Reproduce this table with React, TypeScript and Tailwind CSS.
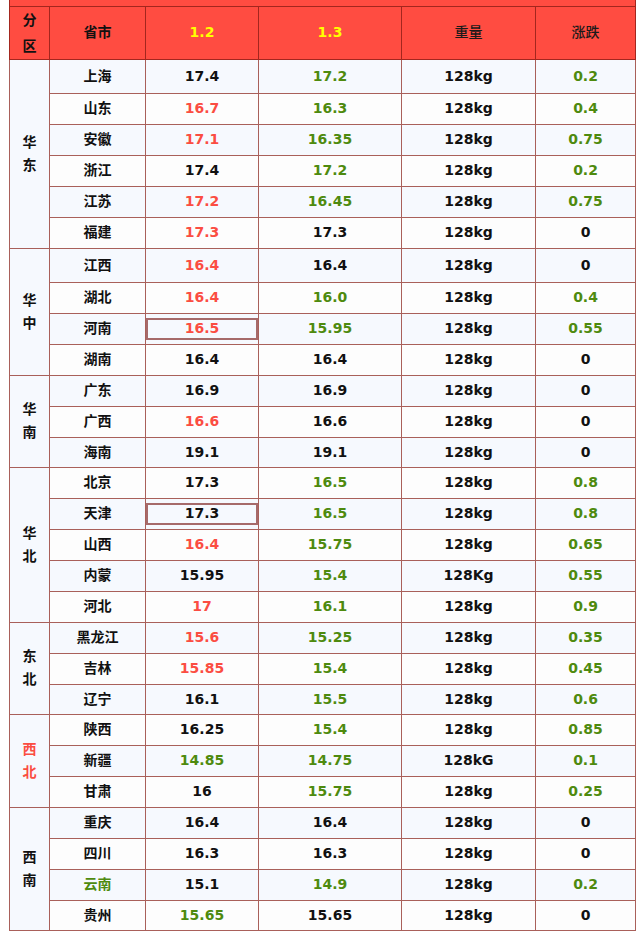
import React from "react";

type Row = {
  name: string;
  nameColor?: "g" | "r" | "k";
  a: string;
  ac: "k" | "r" | "g";
  b: string;
  bc: "k" | "r" | "g";
  w: string;
  d: string;
  dc: "k" | "g";
  boxed?: boolean;
  h: number;
};

type Group = { label: string; red?: boolean; rows: Row[] };

const groups: Group[] = [
  {
    label: "华东",
    rows: [
      { name: "上海", a: "17.4", ac: "k", b: "17.2", bc: "g", w: "128kg", d: "0.2", dc: "g", h: 34 },
      { name: "山东", a: "16.7", ac: "r", b: "16.3", bc: "g", w: "128kg", d: "0.4", dc: "g", h: 31 },
      { name: "安徽", a: "17.1", ac: "r", b: "16.35", bc: "g", w: "128kg", d: "0.75", dc: "g", h: 31 },
      { name: "浙江", a: "17.4", ac: "k", b: "17.2", bc: "g", w: "128kg", d: "0.2", dc: "g", h: 31 },
      { name: "江苏", a: "17.2", ac: "r", b: "16.45", bc: "g", w: "128kg", d: "0.75", dc: "g", h: 31 },
      { name: "福建", a: "17.3", ac: "r", b: "17.3", bc: "k", w: "128kg", d: "0", dc: "k", h: 31 },
    ],
  },
  {
    label: "华中",
    rows: [
      { name: "江西", a: "16.4", ac: "r", b: "16.4", bc: "k", w: "128kg", d: "0", dc: "k", h: 34 },
      { name: "湖北", a: "16.4", ac: "r", b: "16.0", bc: "g", w: "128kg", d: "0.4", dc: "g", h: 31 },
      { name: "河南", a: "16.5", ac: "r", b: "15.95", bc: "g", w: "128kg", d: "0.55", dc: "g", boxed: true, h: 31 },
      { name: "湖南", a: "16.4", ac: "k", b: "16.4", bc: "k", w: "128kg", d: "0", dc: "k", h: 31 },
    ],
  },
  {
    label: "华南",
    rows: [
      { name: "广东", a: "16.9", ac: "k", b: "16.9", bc: "k", w: "128kg", d: "0", dc: "k", h: 31 },
      { name: "广西", a: "16.6", ac: "r", b: "16.6", bc: "k", w: "128kg", d: "0", dc: "k", h: 31 },
      { name: "海南", a: "19.1", ac: "k", b: "19.1", bc: "k", w: "128kg", d: "0", dc: "k", h: 30 },
    ],
  },
  {
    label: "华北",
    rows: [
      { name: "北京", a: "17.3", ac: "k", b: "16.5", bc: "g", w: "128kg", d: "0.8", dc: "g", h: 31 },
      { name: "天津", a: "17.3", ac: "k", b: "16.5", bc: "g", w: "128kg", d: "0.8", dc: "g", boxed: true, h: 31 },
      { name: "山西", a: "16.4", ac: "r", b: "15.75", bc: "g", w: "128kg", d: "0.65", dc: "g", h: 31 },
      { name: "内蒙", a: "15.95", ac: "k", b: "15.4", bc: "g", w: "128Kg", d: "0.55", dc: "g", h: 31 },
      { name: "河北", a: "17", ac: "r", b: "16.1", bc: "g", w: "128kg", d: "0.9", dc: "g", h: 31 },
    ],
  },
  {
    label: "东北",
    rows: [
      { name: "黑龙江", a: "15.6", ac: "r", b: "15.25", bc: "g", w: "128kg", d: "0.35", dc: "g", h: 31 },
      { name: "吉林", a: "15.85", ac: "r", b: "15.4", bc: "g", w: "128kg", d: "0.45", dc: "g", h: 31 },
      { name: "辽宁", a: "16.1", ac: "k", b: "15.5", bc: "g", w: "128kg", d: "0.6", dc: "g", h: 30 },
    ],
  },
  {
    label: "西北",
    red: true,
    rows: [
      { name: "陕西", a: "16.25", ac: "k", b: "15.4", bc: "g", w: "128kg", d: "0.85", dc: "g", h: 31 },
      { name: "新疆", a: "14.85", ac: "g", b: "14.75", bc: "g", w: "128kG", d: "0.1", dc: "g", h: 31 },
      { name: "甘肃", a: "16", ac: "k", b: "15.75", bc: "g", w: "128kg", d: "0.25", dc: "g", h: 31 },
    ],
  },
  {
    label: "西南",
    rows: [
      { name: "重庆", a: "16.4", ac: "k", b: "16.4", bc: "k", w: "128kg", d: "0", dc: "k", h: 31 },
      { name: "四川", a: "16.3", ac: "k", b: "16.3", bc: "k", w: "128kg", d: "0", dc: "k", h: 31 },
      { name: "云南", nameColor: "g", a: "15.1", ac: "k", b: "14.9", bc: "g", w: "128kg", d: "0.2", dc: "g", h: 31 },
      { name: "贵州", a: "15.65", ac: "g", b: "15.65", bc: "k", w: "128kg", d: "0", dc: "k", h: 30 },
    ],
  },
];

const colorClass = (c?: "k" | "r" | "g") =>
  c === "r" ? "text-[#fb4d42]" : c === "g" ? "text-[#4e8a0e]" : "text-[#111111]";

const td = "border border-[#a9605a] text-center align-middle p-0";

export default function App() {
  let idx = 0;
  return (
    <div
      className="w-[641px] h-[938px] bg-white overflow-hidden"
      style={{ fontFamily: '"DejaVu Sans", "Noto Sans CJK SC", sans-serif' }}
    >
      <table className="ml-[9px] w-[626px] table-fixed border-collapse text-[14px] font-bold">
        <colgroup>
          <col className="w-[40px]" />
          <col className="w-[96px]" />
          <col className="w-[113px]" />
          <col className="w-[143px]" />
          <col className="w-[134px]" />
          <col className="w-[100px]" />
        </colgroup>
        <tbody>
          <tr className="h-[6px]">
            <td colSpan={6} className="bg-[#ff4c41] border-x border-b border-[#a3261e] p-0"></td>
          </tr>
          <tr className="h-[51px] bg-[#ff4c41]">
            <td className="border border-[#a3261e] text-center align-middle p-0">
              <div className="flex flex-col items-center leading-[26px] text-[#111]">
                <span>分</span>
                <span>区</span>
              </div>
            </td>
            <td className="border border-[#a3261e] text-center text-[#111]">省市</td>
            <td className="border border-[#a3261e] text-center text-[#ffff00]">1.2</td>
            <td className="border border-[#a3261e] text-center text-[#ffff00]">1.3</td>
            <td className="border border-[#a3261e] text-center text-[#1a1a1a] font-medium">重量</td>
            <td className="border border-[#a3261e] text-center text-[#1a1a1a] font-medium">涨跌</td>
          </tr>
          {groups.map((g) =>
            g.rows.map((r, i) => {
              const bg = idx % 2 === 0 ? "bg-[#f6f9fe]" : "bg-[#fdfdfd]";
              idx++;
              return (
                <tr key={r.name} className={bg} style={{ height: r.h }}>
                  {i === 0 && (
                    <td rowSpan={g.rows.length} className={`${td} bg-[#f6f9fe]`}>
                      <div
                        className={`flex flex-col items-center leading-[23px] ${
                          g.red ? "text-[#fb4d42]" : "text-[#111]"
                        }`}
                      >
                        <span>{g.label[0]}</span>
                        <span>{g.label[1]}</span>
                      </div>
                    </td>
                  )}
                  <td className={`${td} ${colorClass(r.nameColor)}`}>{r.name}</td>
                  <td className={`${td} ${colorClass(r.ac)}`}>
                    {r.boxed ? (
                      <div className="h-[22px] flex items-center justify-center border-2 border-[#a66a6a]">
                        {r.a}
                      </div>
                    ) : (
                      r.a
                    )}
                  </td>
                  <td className={`${td} ${colorClass(r.bc)}`}>{r.b}</td>
                  <td className={`${td} text-[#111]`}>{r.w}</td>
                  <td className={`${td} ${colorClass(r.dc)}`}>{r.d}</td>
                </tr>
              );
            })
          )}
        </tbody>
      </table>
    </div>
  );
}
